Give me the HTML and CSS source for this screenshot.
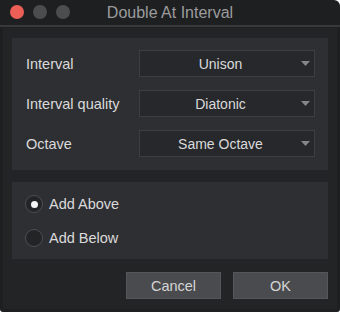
FILE: index.html
```html
<!DOCTYPE html>
<html lang="en">
<head>
  <meta charset="UTF-8">
  <title>Double At Interval</title>
  <link rel="stylesheet" href="styles.css">
</head>
<body>
  <div class="window">
    <div class="titlebar">
      <div class="lights">
        <span class="light close"></span>
        <span class="light"></span>
        <span class="light"></span>
      </div>
      <div class="title">Double At Interval</div>
      <div></div>
    </div>
    <div class="content">
      <div class="panel fields">
        <div class="row">
          <span class="label">Interval</span>
          <div class="select">
            <span>Unison</span>
            <svg width="9" height="5" viewBox="0 0 9 5"><path d="M0 0H9L4.5 5Z" fill="#858687"/></svg>
          </div>
        </div>
        <div class="row">
          <span class="label">Interval quality</span>
          <div class="select">
            <span>Diatonic</span>
            <svg width="9" height="5" viewBox="0 0 9 5"><path d="M0 0H9L4.5 5Z" fill="#858687"/></svg>
          </div>
        </div>
        <div class="row">
          <span class="label">Octave</span>
          <div class="select">
            <span>Same Octave</span>
            <svg width="9" height="5" viewBox="0 0 9 5"><path d="M0 0H9L4.5 5Z" fill="#858687"/></svg>
          </div>
        </div>
      </div>
      <div class="panel options">
        <div class="radio checked"><span class="dot"></span>Add Above</div>
        <div class="radio"><span class="dot"></span>Add Below</div>
      </div>
      <div class="buttons">
        <button class="btn">Cancel</button>
        <button class="btn">OK</button>
      </div>
    </div>
  </div>
</body>
</html>
```
FILE: styles.css
```css
:root {
  --window: #1e1f21;
  --frame: #232426;
  --panel: #2e2f32;
  --field: #27282b;
  --field-border: #3d3e41;
  --text: #dadadb;
}
body {
  margin: 0;
  background: #fff;
  font-family: 'Liberation Sans', Arial, sans-serif;
  color: var(--text);
}
.window {
  width: 340px;
  height: 312px;
  background: var(--window);
  border-radius: 0 6px 3px 3px;
  box-sizing: border-box;
  display: flex;
  flex-direction: column;
  overflow: hidden;
}
.titlebar {
  height: 25px;
  border-bottom: 2px solid #38393b;
  display: grid;
  grid-template-columns: 1fr auto 1fr;
  align-items: center;
}
.lights {
  display: flex;
  gap: 9px;
  padding-left: 10px;
  margin-top: -1px;
}
.light {
  width: 14px;
  height: 14px;
  border-radius: 50%;
  background: #4c4d4f;
}
.light.close {
  background: #ec5f57;
}
.title {
  font-size: 16px;
  color: #9c9c9e;
  margin-top: 1px;
}
.content {
  flex: 1;
  margin: 1px 3px 3px 3px;
  padding: 10px 9px;
  background: var(--frame);
  display: flex;
  flex-direction: column;
}
.panel {
  background: var(--panel);
}
.fields {
  padding: 12px 13px 13px 14px;
  display: flex;
  flex-direction: column;
  gap: 13px;
}
.row {
  display: flex;
  align-items: center;
}
.label {
  width: 113px;
  font-size: 14.5px;
}
.select {
  flex: 1;
  height: 27px;
  box-sizing: border-box;
  background: var(--field);
  border: 1px solid var(--field-border);
  display: flex;
  align-items: center;
  padding-right: 4px;
  font-size: 14px;
}
.select span {
  flex: 1;
  text-align: center;
}
.options {
  margin-top: 12px;
  padding: 13px 13px 12px 13px;
  display: flex;
  flex-direction: column;
  gap: 16px;
}
.radio {
  display: flex;
  align-items: center;
  gap: 6px;
  font-size: 14.5px;
  height: 18px;
}
.radio .dot {
  width: 18px;
  height: 18px;
  box-sizing: border-box;
  border-radius: 50%;
  border: 1px solid #4d4e51;
  background: #232426;
  display: flex;
  align-items: center;
  justify-content: center;
}
.radio.checked .dot::after {
  content: '';
  width: 7px;
  height: 7px;
  border-radius: 50%;
  background: #f4f4f4;
}
.buttons {
  margin-top: 13px;
  display: flex;
  justify-content: flex-end;
  gap: 12px;
}
.btn {
  width: 95px;
  height: 27px;
  margin: 0;
  background: #4a4b4e;
  border: 1px solid #555659;
  color: #d4d4d5;
  font-family: inherit;
  font-size: 14.5px;
  padding: 0;
}
```
